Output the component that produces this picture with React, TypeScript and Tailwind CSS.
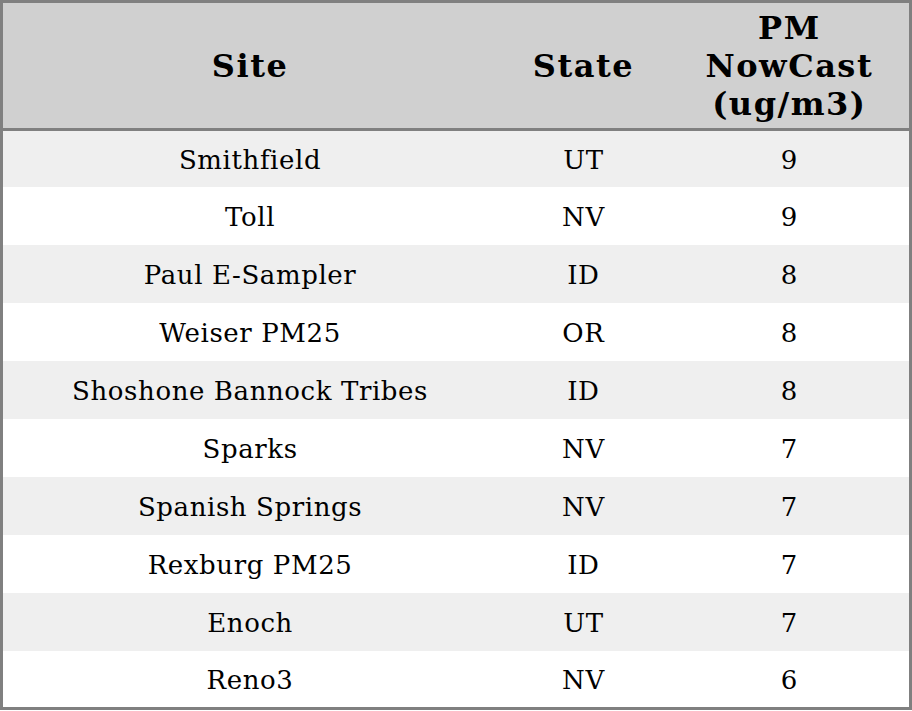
import React from 'react';

type Row = { site: string; state: string; pm: number };

const rows: Row[] = [
  { site: 'Smithfield', state: 'UT', pm: 9 },
  { site: 'Toll', state: 'NV', pm: 9 },
  { site: 'Paul E-Sampler', state: 'ID', pm: 8 },
  { site: 'Weiser PM25', state: 'OR', pm: 8 },
  { site: 'Shoshone Bannock Tribes', state: 'ID', pm: 8 },
  { site: 'Sparks', state: 'NV', pm: 7 },
  { site: 'Spanish Springs', state: 'NV', pm: 7 },
  { site: 'Rexburg PM25', state: 'ID', pm: 7 },
  { site: 'Enoch', state: 'UT', pm: 7 },
  { site: 'Reno3', state: 'NV', pm: 6 },
];

const App = () => {
  return (
    <div className="w-[912px] h-[711px] overflow-hidden bg-white font-['DejaVu_Serif',serif] text-black">
      <table className="w-[912px] table-fixed border-collapse border-[3px] border-[#808080]">
        <colgroup>
          <col className="w-[494px]" />
          <col className="w-[172px]" />
          <col className="w-[240px]" />
        </colgroup>
        <thead>
          <tr className="h-[128px] bg-[#d0d0d0] border-b-[3px] border-[#808080]">
            <th className="p-0 text-[32px] leading-[38px] tracking-[1.5px] font-bold text-center align-middle">Site</th>
            <th className="p-0 text-[32px] leading-[38px] tracking-[1.5px] font-bold text-center align-middle">State</th>
            <th className="p-0 text-[32px] leading-[38px] tracking-[1.5px] font-bold text-center align-middle">
              PM
              <br />
              NowCast
              <br />
              (ug/m3)
            </th>
          </tr>
        </thead>
        <tbody>
          {rows.map((row, i) => (
            <tr
              key={row.site}
              className={(i % 2 === 0 ? 'bg-[#efefef] ' : 'bg-white ') + (i === 0 ? 'h-[57px]' : 'h-[58px]')}
            >
              <td className="p-0 pt-[3px] text-[26px] leading-[30px] tracking-[0.6px] text-center align-middle">{row.site}</td>
              <td className="p-0 pt-[3px] text-[26px] leading-[30px] tracking-[0.6px] text-center align-middle">{row.state}</td>
              <td className="p-0 pt-[3px] text-[26px] leading-[30px] tracking-[0.6px] text-center align-middle">{row.pm}</td>
            </tr>
          ))}
        </tbody>
      </table>
    </div>
  );
};

export default App;
